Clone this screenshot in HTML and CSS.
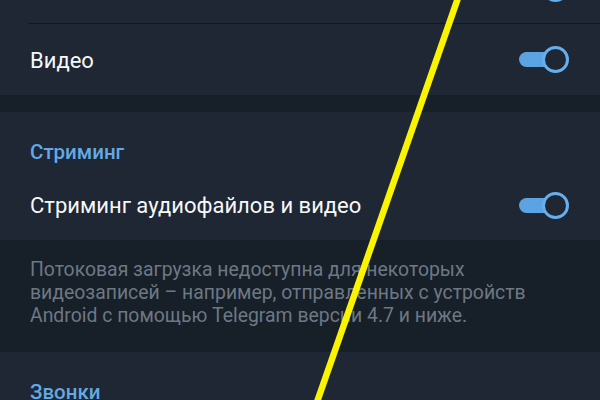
FILE: index.html
```html
<!DOCTYPE html>
<html lang="ru">
<head>
<meta charset="utf-8">
<title>Настройки</title>
<link rel="stylesheet" href="styles.css">
</head>
<body>
<div class="page">
  <div class="section">
    <div class="row row-divided">
      <span class="label"></span>
      <span class="toggle"><span class="track"></span><span class="thumb"></span></span>
    </div>
    <div class="row">
      <span class="label">Видео</span>
      <span class="toggle"><span class="track"></span><span class="thumb"></span></span>
    </div>
  </div>
  <div class="gap"></div>
  <div class="section">
    <div class="header">Стриминг</div>
    <div class="row row-stream">
      <span class="label">Стриминг аудиофайлов и видео</span>
      <span class="toggle"><span class="track"></span><span class="thumb"></span></span>
    </div>
  </div>
  <div class="info">Потоковая загрузка недоступна для некоторых видеозаписей – например, отправленных с устройств Android с помощью Telegram версии 4.7 и ниже.</div>
  <div class="section">
    <div class="header">Звонки</div>
  </div>
</div>
<svg class="overlay" width="600" height="400" viewBox="0 0 600 400">
  <line x1="458" y1="-2" x2="317" y2="402" stroke="#fbf400" stroke-width="6.5"/>
</svg>
</body>
</html>
```
FILE: styles.css
```css
html, body {
  margin: 0;
  padding: 0;
}
body {
  width: 600px;
  height: 400px;
  overflow: hidden;
  background: #1e2733;
  font-family: Roboto, "Noto Sans", sans-serif;
  position: relative;
}
.page {
  margin-top: -47px;
}
.section {
  background: #1e2733;
}
.row {
  height: 71px;
  display: flex;
  align-items: center;
  justify-content: space-between;
  padding: 0 31px 0 30px;
  position: relative;
}
.row-divided::after {
  content: "";
  position: absolute;
  left: 28px;
  right: 0;
  bottom: 0;
  height: 1px;
  background: #121820;
}
.row-divided {
  height: 70px;
  padding-bottom: 1px;
}
.label {
  color: #f7f8f9;
  font-size: 22px;
  line-height: 26px;
  padding-top: 2px;
}
.toggle {
  position: relative;
  width: 50px;
  height: 27px;
  display: block;
}
.track {
  position: absolute;
  left: 0;
  top: 6px;
  width: 38px;
  height: 15px;
  border-radius: 8px;
  background: #5ba3e3;
}
.thumb {
  position: absolute;
  right: 0;
  top: 0;
  width: 21px;
  height: 21px;
  border-radius: 50%;
  border: 3px solid #66aeec;
  background: #1e2733;
}
.gap {
  height: 17px;
  background: #171f28;
}
.header {
  color: #62a9e6;
  font-size: 20.5px;
  font-weight: 500;
  line-height: 24px;
  padding: 28px 30px 6px;
}
.row-stream {
  height: 70px;
  padding-top: 0;
}
.info {
  background: #171f28;
  color: #6d7884;
  font-size: 19.4px;
  line-height: 23px;
  padding: 18px 30px 25px;
  height: 69px;
}
.overlay {
  position: absolute;
  left: 0;
  top: 0;
}
```
